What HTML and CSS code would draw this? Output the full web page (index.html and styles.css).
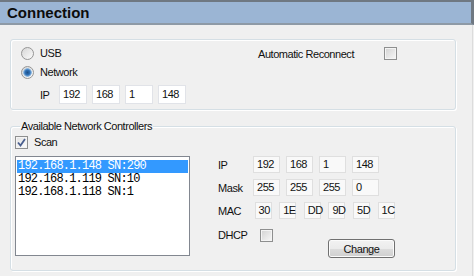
FILE: index.html
```html
<!DOCTYPE html>
<html lang="en">
<head>
  <meta charset="UTF-8" />
  <title>Connection</title>
  <link rel="stylesheet" href="styles.css">
</head>
<body>
  <div class="title">Connection</div>

  <div class="content">
    <fieldset class="group conn">
      <div class="conn-left">
        <div class="opt"><span class="radio"></span>USB</div>
        <div class="opt"><span class="radio checked"></span>Network</div>
        <div class="ip-row">
          <span class="ip-label">IP</span>
          <span class="box edit">192</span>
          <span class="box edit">168</span>
          <span class="box edit">1</span>
          <span class="box edit">148</span>
        </div>
      </div>
      <div class="conn-right">
        <span class="auto-label">Automatic Reconnect</span>
        <span class="check"></span>
      </div>
    </fieldset>

    <fieldset class="group ctrl">
      <legend>Available Network Controllers</legend>
      <div class="ctrl-left">
        <div class="opt">
          <span class="check checked">
            <svg width="11" height="11" viewBox="0 0 11 11"><path d="M2 5.5 L4.5 8.5 L9 2" fill="none" stroke="#4a5f8e" stroke-width="1.8"/></svg>
          </span>Scan
        </div>
        <ul class="list">
          <li class="sel">192.168.1.148 SN:290</li>
          <li>192.168.1.119 SN:10</li>
          <li>192.168.1.118 SN:1</li>
        </ul>
      </div>

      <div class="details">
        <div class="row">
          <span class="lbl">IP</span>
          <span class="box ro wide">192</span>
          <span class="box ro wide">168</span>
          <span class="box ro wide">1</span>
          <span class="box ro wide">148</span>
        </div>
        <div class="row">
          <span class="lbl">Mask</span>
          <span class="box ro wide">255</span>
          <span class="box ro wide">255</span>
          <span class="box ro wide">255</span>
          <span class="box ro wide">0</span>
        </div>
        <div class="row mac">
          <span class="lbl">MAC</span>
          <span class="box ro">30</span>
          <span class="box ro">1E</span>
          <span class="box ro">DD</span>
          <span class="box ro">9D</span>
          <span class="box ro">5D</span>
          <span class="box ro">1C</span>
        </div>
        <div class="dhcp">
          <span class="lbl">DHCP</span>
          <span class="check"></span>
          <button class="btn">Change</button>
        </div>
      </div>
    </fieldset>
  </div>
</body>
</html>
```

FILE: styles.css
```css
* {
  box-sizing: border-box;
}

body {
  margin: 0;
  width: 474px;
  height: 276px;
  overflow: hidden;
  background: #f0f0f0;
  font-family: 'Liberation Sans', Arial, sans-serif;
  font-size: 11px;
  letter-spacing: -0.45px;
  color: #111;
}

.title {
  height: 25px;
  border-top: 2px solid #6f7882;
  border-bottom: 2px solid #8e9aa6;
  border-right: 3px solid #6f7882;
  background: #9bb5d4;
  padding-left: 7px;
  line-height: 21px;
  font-size: 15px;
  font-weight: 700;
  letter-spacing: 0;
  color: #0c0c0c;
}

.content {
  width: 473px;
  height: 251px;
  padding: 14px 0 0 10px;
  border-right: 1px solid #dcdcdc;
}

.group {
  margin: 0;
  padding: 0;
  min-width: 0;
  width: 446px;
  border: 1px solid #d5dfe5;
  border-radius: 3px;
  box-shadow: inset 1px 1px 0 #fff, 1px 1px 0 #fff;
}

/* connection type */
.conn {
  display: flex;
  height: 71px;
  padding: 7px 0 0 10px;
}

.conn-left {
  width: 237px;
  display: flex;
  flex-direction: column;
  gap: 6px;
}

.opt {
  display: flex;
  align-items: center;
  height: 13px;
  gap: 6px;
  line-height: 13px;
}

.radio {
  width: 13px;
  height: 13px;
  border-radius: 50%;
  border: 1px solid #959595;
  background: linear-gradient(135deg, #d6d6d6, #fbfbfb);
}

.radio.checked {
  background:
    radial-gradient(circle at 50% 50%, #1d4f88 0, #2f72b8 2.5px, #8fb8df 4px, transparent 4.6px),
    linear-gradient(135deg, #d6d6d6, #fbfbfb);
}

.ip-row {
  display: flex;
  align-items: center;
  height: 19px;
  gap: 5px;
}

.ip-label {
  width: 14px;
  margin-left: 19px;
}

.box {
  height: 17px;
  line-height: 15px;
  padding-left: 3px;
  border: 1px solid #e1e3e8;
  background: #fff;
}

.box.edit {
  width: 28px;
  height: 19px;
  line-height: 17px;
}

.conn-right {
  display: flex;
  align-items: center;
  height: 13px;
}

.auto-label {
  width: 126px;
}

.check {
  display: flex;
  align-items: center;
  justify-content: center;
  width: 13px;
  height: 13px;
  border: 1px solid #8e8f8f;
  background: linear-gradient(135deg, #d2d2d2, #f8f8f8);
  box-shadow: inset 0 0 0 1px #f4f4f4;
}

.check.checked {
  background: linear-gradient(135deg, #e2e2e2, #fdfdfd);
}

/* network controllers */
.ctrl {
  display: flex;
  margin-top: 10px;
  padding: 0 0 12px 4px;
}

.ctrl legend {
  margin-left: 5px;
  padding: 0 1px;
  line-height: 13px;
}

.ctrl-left {
  margin-top: 3px;
}

.list {
  list-style: none;
  margin: 7px 0 0;
  padding: 3px 1px;
  width: 175px;
  height: 100px;
  border: 1px solid #828790;
  background: #fff;
  font-family: 'Liberation Mono', 'Courier New', monospace;
  font-size: 12px;
  letter-spacing: -0.8px;
  color: #000;
}

.list li {
  height: 13px;
  line-height: 13px;
  padding-left: 1px;
  white-space: nowrap;
}

.list li.sel {
  background: #3399ff;
  color: #fff;
}

.details {
  margin: 23px 0 0 28px;
  display: flex;
  flex-direction: column;
  gap: 6px;
}

.row {
  display: flex;
  align-items: center;
  height: 17px;
  gap: 6px;
}

.row.mac {
  gap: 7.6px;
}

.lbl {
  width: 29px;
}

.box.ro {
  width: 17px;
  background: #f9f9f9;
  border-color: #dfdfdf;
}

.box.ro.wide {
  width: 27px;
}

.dhcp {
  display: flex;
  align-items: flex-start;
  padding-top: 4px;
  line-height: 13px;
}

.dhcp .lbl {
  width: 42px;
}

.btn {
  margin: 10px 0 0 55px;
  width: 67px;
  height: 19px;
  padding: 0;
  border: 1px solid #707070;
  border-radius: 3px;
  background: linear-gradient(#f2f2f2, #ebebeb 50%, #dddddd 50%, #cfcfcf);
  box-shadow: inset 0 0 0 1px #fbfbfb;
  font-family: 'Liberation Sans', Arial, sans-serif;
  font-size: 11px;
  letter-spacing: -0.45px;
  color: #111;
}
```
